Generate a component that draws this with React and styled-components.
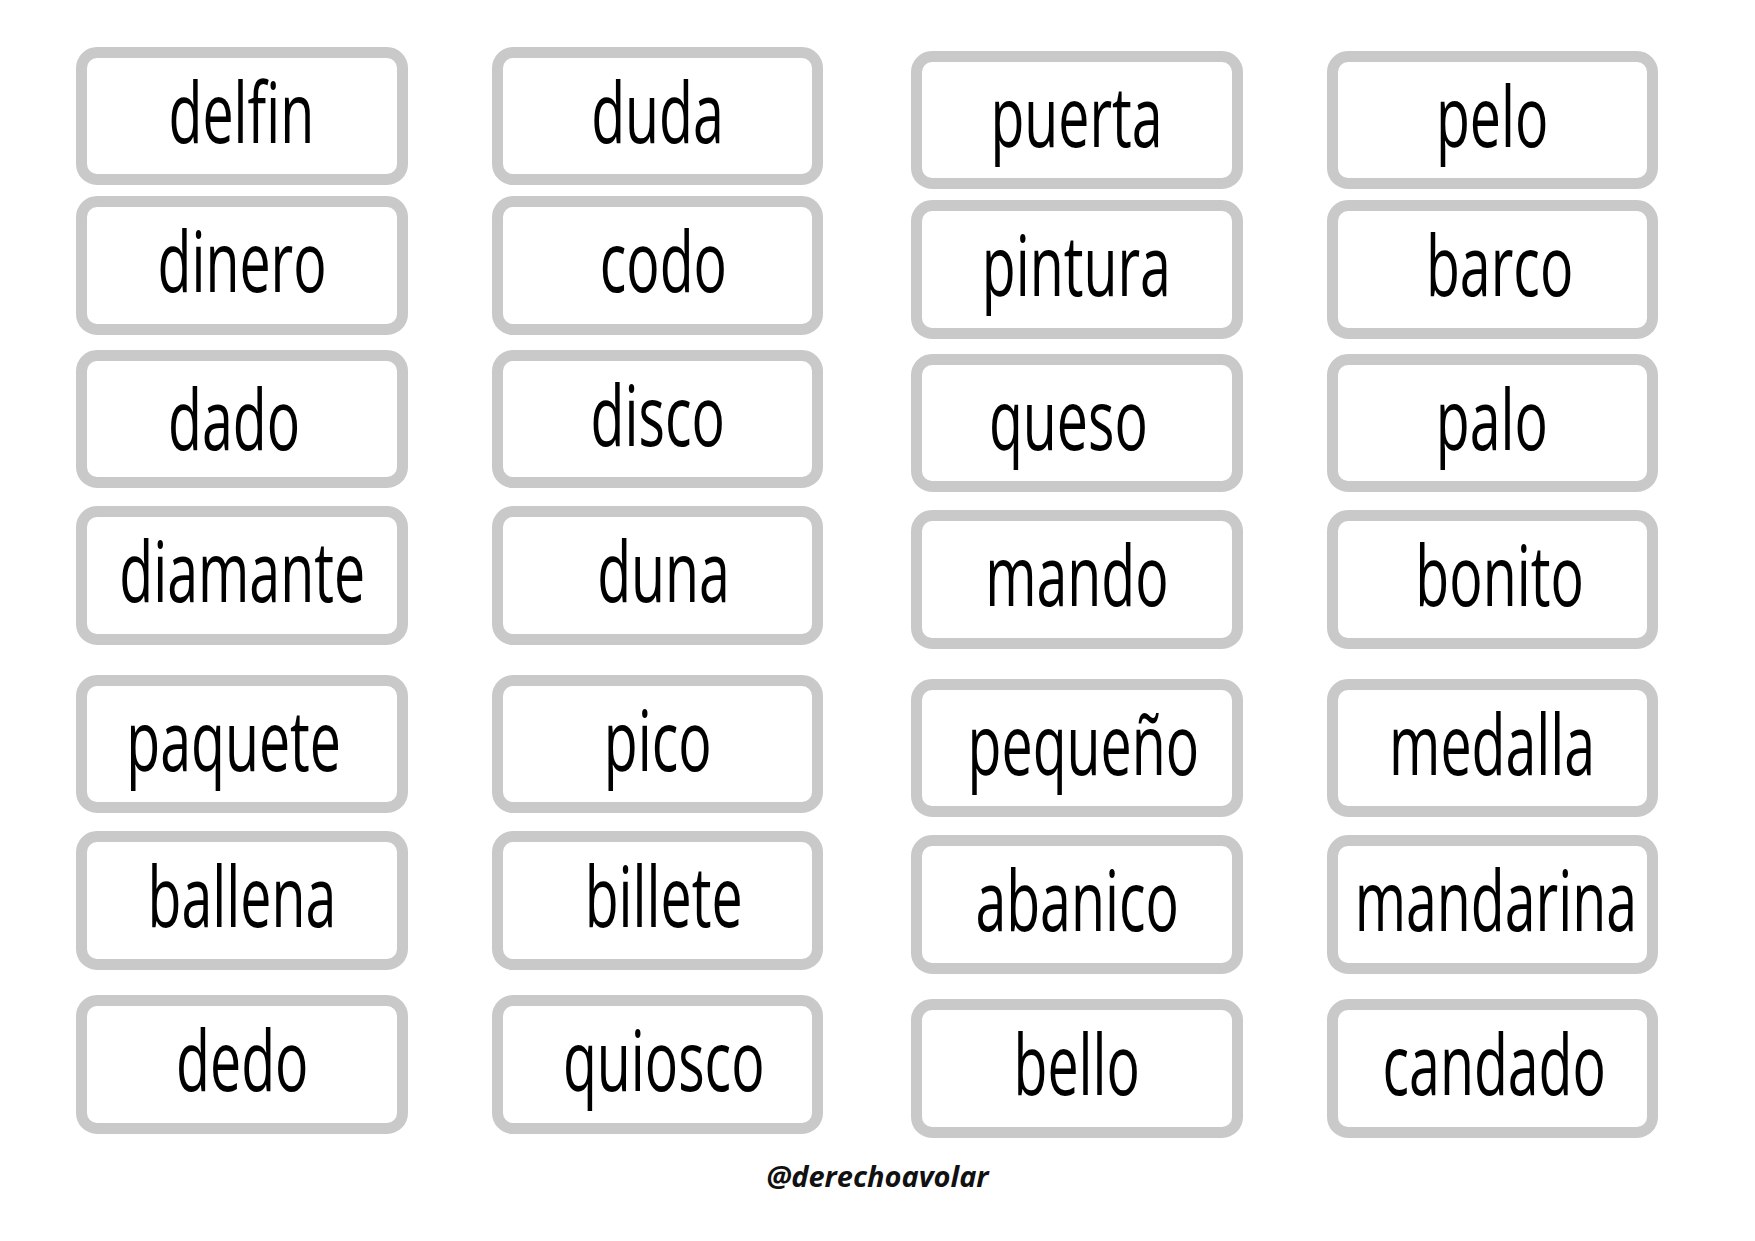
import React from 'react'
import styled, { createGlobalStyle } from 'styled-components'

const GlobalStyle = createGlobalStyle`
  html, body {
    margin: 0;
    padding: 0;
    background: #ffffff;
  }
  body {
    font-family: "Open Sans", "Liberation Sans", sans-serif;
  }
`

// each column: left margin, top padding, and its cards (gap before, word, x nudge)
const columns = [
  {
    ml: 76,
    top: 46.5,
    cards: [
      { word: 'delfin', gap: 0 },
      { word: 'dinero', gap: 11 },
      { word: 'dado', gap: 15, dx: -8, dy: 4 },
      { word: 'diamante', gap: 18 },
      { word: 'paquete', gap: 30, dx: -8 },
      { word: 'ballena', gap: 18 },
      { word: 'dedo', gap: 25.5 },
    ],
  },
  {
    ml: 84,
    top: 46.5,
    cards: [
      { word: 'duda', gap: 0 },
      { word: 'codo', gap: 11, dx: 6 },
      { word: 'disco', gap: 15 },
      { word: 'duna', gap: 18, dx: 6 },
      { word: 'pico', gap: 30 },
      { word: 'billete', gap: 18, dx: 6 },
      { word: 'quiosco', gap: 25.5, dx: 6 },
    ],
  },
  {
    ml: 88,
    top: 50.5,
    cards: [
      { word: 'puerta', gap: 0 },
      { word: 'pintura', gap: 11 },
      { word: 'queso', gap: 15, dx: -8 },
      { word: 'mando', gap: 18 },
      { word: 'pequeño', gap: 30, dx: 7 },
      { word: 'abanico', gap: 18 },
      { word: 'bello', gap: 25.5 },
    ],
  },
  {
    ml: 84,
    top: 50.5,
    cards: [
      { word: 'pelo', gap: 0 },
      { word: 'barco', gap: 11, dx: 7 },
      { word: 'palo', gap: 15 },
      { word: 'bonito', gap: 18, dx: 7 },
      { word: 'medalla', gap: 30 },
      { word: 'mandarina', gap: 18, dx: 4 },
      { word: 'candado', gap: 25.5, dx: 2 },
    ],
  },
]

const App = () => {
  return (
    <>
      <GlobalStyle />
      <Sheet>
        <Board>
          {columns.map((col, i) => (
            <Column key={i} $ml={col.ml} $top={col.top}>
              {col.cards.map((c) => (
                <WordCard key={c.word} $gap={c.gap}>
                  <Word $dx={c.dx || 0} $dy={c.dy || 0}>{c.word}</Word>
                </WordCard>
              ))}
            </Column>
          ))}
        </Board>
        <Credit>@derechoavolar</Credit>
      </Sheet>
    </>
  )
}

export default App

const Sheet = styled.main`
  width: 1755px;
  height: 1241px;
  background: #ffffff;
  display: flex;
  flex-direction: column;
  overflow: hidden;
`
const Board = styled.div`
  display: flex;
  align-items: flex-start;
`
const Column = styled.div`
  display: flex;
  flex-direction: column;
  width: 331.5px;
  margin-left: ${(p) => p.$ml}px;
  padding-top: ${(p) => p.$top}px;
`
const WordCard = styled.div`
  box-sizing: border-box;
  height: 138.5px;
  margin-top: ${(p) => p.$gap}px;
  border: 11px solid #c8c9c8;
  border-radius: 21px;
  background: #ffffff;
  display: flex;
  align-items: center;
  justify-content: center;
  overflow: visible;
`
const Word = styled.span`
  display: inline-block;
  font-family: "Open Sans", "Liberation Sans", sans-serif;
  font-size: 84px;
  font-weight: 500;
  line-height: 1;
  color: #000000;
  white-space: nowrap;
  transform: translate(${(p) => p.$dx}px, ${(p) => p.$dy - 5}px) scaleX(0.66);
`
const Credit = styled.div`
  margin-top: 21px;
  text-align: center;
  font-family: "Open Sans", "Liberation Sans", sans-serif;
  font-size: 29px;
  font-weight: 700;
  font-style: italic;
  color: #111111;
  line-height: 1.2;
`
